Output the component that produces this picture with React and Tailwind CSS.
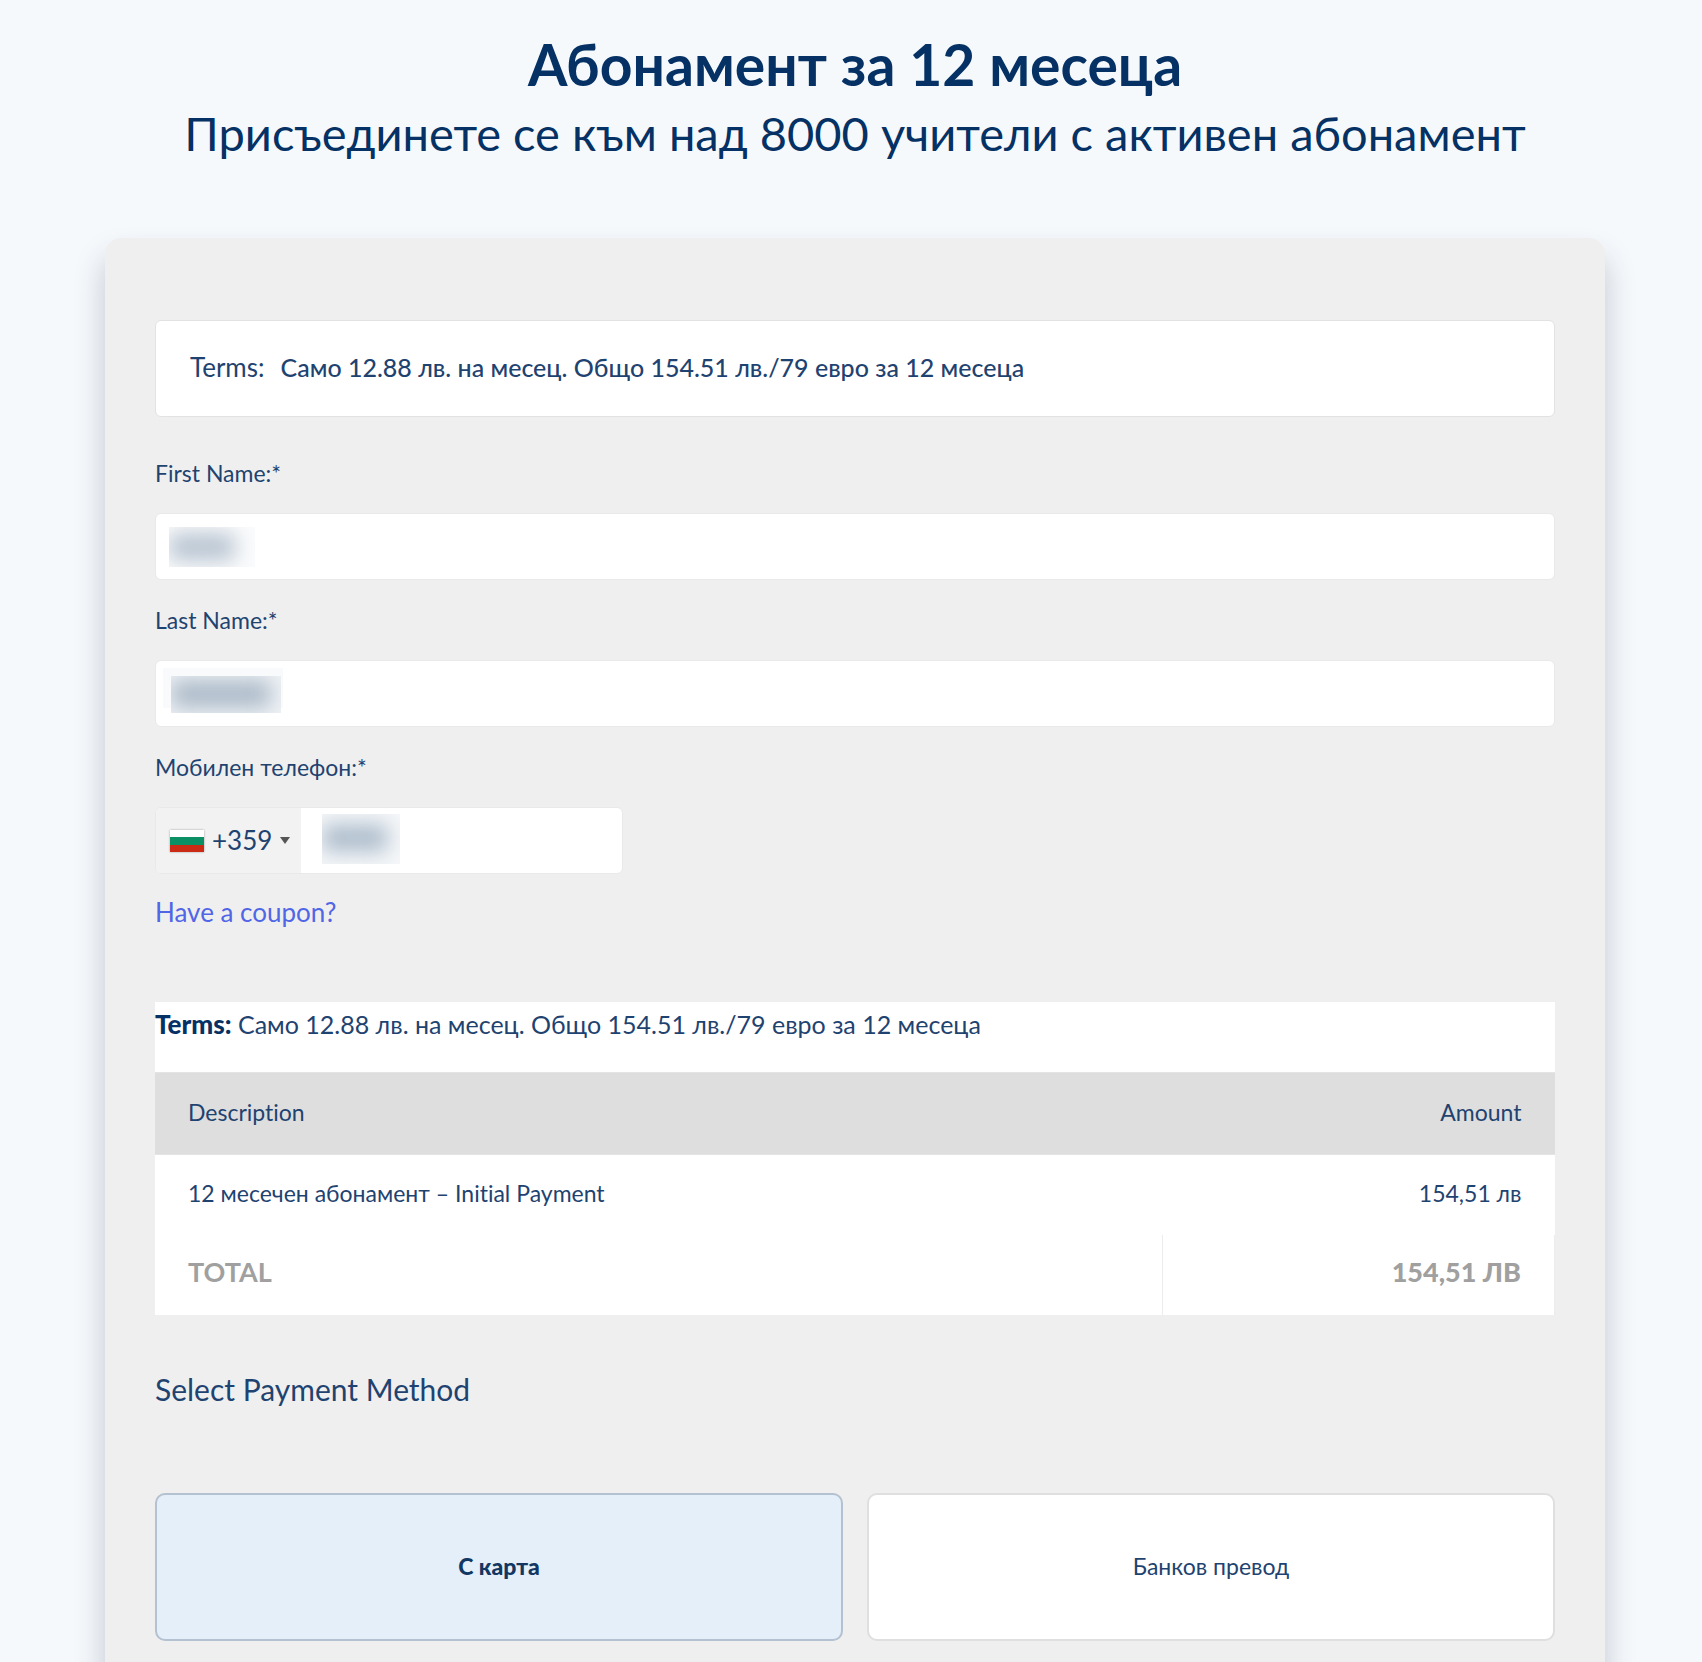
import React, { useState } from 'react';

const terms = 'Само 12.88 лв. на месец. Общо 154.51 лв./79 евро за 12 месеца';

const methods = [
  { id: 'card', label: 'С карта' },
  { id: 'bank', label: 'Банков превод' },
];

const BulgarianFlag = () => (
  <svg width="34" height="22" viewBox="0 0 34 22" aria-hidden="true" className="shrink-0 shadow-[0_0_2px_rgba(0,0,0,0.35)]">
    <rect width="34" height="8" fill="#ffffff" />
    <rect y="7" width="34" height="8" fill="#0b8f65" />
    <rect y="15" width="34" height="7" fill="#cb2a15" />
  </svg>
);

const TextField = ({ id, label, children }) => (
  <div className="mb-5">
    <label htmlFor={id} className="block text-[23px] leading-10 mb-5">{label}</label>
    <div className="relative">
      <input
        id={id}
        type="text"
        className="block w-full h-[67px] rounded-md border border-[#e9e9e9] bg-white px-4 text-[25px]"
      />
      {children}
    </div>
  </div>
);

const App = () => {
  const [method, setMethod] = useState('card');

  return (
    <div lang="bg" className="min-h-screen overflow-hidden bg-[#f5f9fc] pl-[105px] pr-[97px] pt-[29px] font-['Lato','Noto_Sans',sans-serif] text-[#1f4370] [font-variant-ligatures:none]">
      <header className="text-center text-[#053164]">
        <h1 className="text-[57px] leading-[70px] font-bold">Абонамент за 12 месеца</h1>
        <h2 className="mt-1.5 text-[47px] leading-[56px]">Присъединете се към над 8000 учители с активен абонамент</h2>
      </header>

      <main className="mt-[77px] rounded-t-2xl bg-[#efefef] px-[50px] pt-[82px] pb-10 shadow-[0_20px_30px_rgba(50,50,80,0.25)]">
        <div className="flex h-[97px] items-center gap-4 rounded-md border border-[#e2e2e2] bg-white px-[34px] pb-0.5 text-[25px]">
          <span className="text-[26px]">Terms:</span>
          <span className="font-medium">{terms}</span>
        </div>

        <form className="pt-9" onSubmit={(e) => e.preventDefault()}>
          <TextField id="first-name" label="First Name:*">
            {/* hidden customer data */}
            <div className="pointer-events-none absolute left-3.5 top-3.5 h-10 w-[86px] overflow-hidden bg-[#fafbfc]">
              <div className="mt-1.5 h-7 w-[66px] rounded-lg bg-[#b9c5d2] blur-[10px]" />
            </div>
          </TextField>

          <TextField id="last-name" label="Last Name:*">
            <div className="pointer-events-none absolute left-2 top-2 h-10 w-[120px] bg-[#f9fafb]" />
            <div className="pointer-events-none absolute left-4 top-4 h-[37px] w-[110px] overflow-hidden bg-[#eff2f5]">
              <div className="mt-1 h-7 w-[100px] rounded-lg bg-[#adbbc9] blur-[10px]" />
            </div>
          </TextField>

          <label htmlFor="phone" className="block text-[23px] leading-10 mb-5">Мобилен телефон:*</label>
          <div className="relative flex h-[67px] w-[468px] overflow-hidden rounded-md border border-[#e9e9e9] bg-white">
            <button type="button" className="flex w-[145px] shrink-0 items-center bg-[#f2f2f2] pl-3.5">
              <BulgarianFlag />
              <span className="ml-2 text-[26px]">+359</span>
              <svg width="10" height="7" viewBox="0 0 10 7" aria-hidden="true" className="ml-2">
                <path d="M0 0h10L5 7z" fill="#555555" />
              </svg>
            </button>
            <input id="phone" type="tel" className="min-w-0 flex-1 px-4 text-[25px]" />
            <div className="pointer-events-none absolute left-[166px] top-1.5 h-[50px] w-[78px] overflow-hidden bg-[#f5f7f9]">
              <div className="mt-2.5 h-7 w-[66px] rounded-lg bg-[#afbecd] blur-[10px]" />
            </div>
          </div>

          <a href="#coupon" className="mt-5 inline-block text-[26px] leading-9 text-[#5066e6]">Have a coupon?</a>

          <section className="mt-[72px]">
            <p className="bg-white pb-[26px] text-[25px] leading-[44px]">
              <strong className="text-[26px] font-black text-[#053164]">Terms:</strong> {terms}
            </p>
            <table className="w-full table-fixed border-collapse bg-white text-[23px]">
              <thead>
                <tr className="h-[82px] border-y border-[#e4e4e4] bg-[#dedede]">
                  <th className="px-[33px] pb-0.5 text-left font-normal">Description</th>
                  <th className="w-[28%] px-[33px] pb-0.5 text-right font-normal">Amount</th>
                </tr>
              </thead>
              <tbody>
                <tr className="h-20">
                  <td className="px-[33px] pb-1">12 месечен абонамент – Initial Payment</td>
                  <td className="px-[33px] pb-1 text-right">154,51 лв</td>
                </tr>
              </tbody>
              <tfoot>
                <tr className="h-20 text-[27px] font-black uppercase text-[#a0a0a0]">
                  <th className="border-r border-[#ececec] px-[33px] pb-1 text-left">Total</th>
                  <td className="border-r border-[#ececec] px-[33px] pb-1 text-right">154,51 лв</td>
                </tr>
              </tfoot>
            </table>
          </section>

          <fieldset className="mt-[54px]">
            <legend className="text-[30px] leading-10">Select Payment Method</legend>
            <div className="mt-[84px] grid grid-cols-2 gap-6 text-[23px]">
              {methods.map((item) => (
                <label
                  key={item.id}
                  className={
                    method === item.id
                      ? 'flex h-[148px] cursor-pointer items-center justify-center rounded-[10px] border-2 border-[#b3c1d0] bg-[#e4eff9] font-black text-[#123762]'
                      : 'flex h-[148px] cursor-pointer items-center justify-center rounded-[10px] border-2 border-[#dfdfdf] bg-white'
                  }
                >
                  <input
                    type="radio"
                    name="payment-method"
                    value={item.id}
                    checked={method === item.id}
                    onChange={() => setMethod(item.id)}
                    className="sr-only"
                  />
                  {item.label}
                </label>
              ))}
            </div>
          </fieldset>
        </form>
      </main>
    </div>
  );
};

export default App;
